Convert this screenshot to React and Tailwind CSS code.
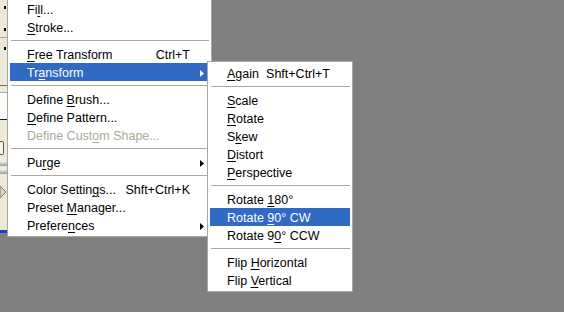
import React from 'react'

const mainItems = [
  { label: ['Fi', 'l', 'l...'] },
  { label: ['', 'S', 'troke...'] },
  { sep: true },
  { label: ['', 'F', 'ree Transform'], key: 'Ctrl+T' },
  { label: ['Tr', 'a', 'nsform'], sub: true, active: true },
  { sep: true },
  { label: ['Define ', 'B', 'rush...'] },
  { label: ['', 'D', 'efine Pattern...'] },
  { label: ['Define Cust', 'o', 'm Shape...'], disabled: true },
  { sep: true },
  { label: ['Pu', 'r', 'ge'], sub: true },
  { sep: true },
  { label: ['Color Settin', 'g', 's...'], key: 'Shft+Ctrl+K' },
  { label: ['Preset ', 'M', 'anager...'] },
  { label: ['Prefere', 'n', 'ces'], sub: true },
]

const subItems = [
  { label: ['', 'A', 'gain'], key: 'Shft+Ctrl+T' },
  { sep: true },
  { label: ['', 'S', 'cale'] },
  { label: ['', 'R', 'otate'] },
  { label: ['S', 'k', 'ew'] },
  { label: ['', 'D', 'istort'] },
  { label: ['', 'P', 'erspective'] },
  { sep: true },
  { label: ['Rotate ', '1', '80°'] },
  { label: ['Rotate ', '9', '0° CW'], active: true },
  { label: ['Rotate 9', '0', '° CCW'] },
  { sep: true },
  { label: ['Flip ', 'H', 'orizontal'] },
  { label: ['Flip ', 'V', 'ertical'] },
]

function Arrow({ white }) {
  return (
    <svg width="4" height="7" viewBox="0 0 4 7" className="block">
      <path d="M0 0 L4 3.5 L0 7 Z" fill={white ? '#ffffff' : '#000000'} />
    </svg>
  )
}

function MenuRow({ item, padRight }) {
  if (item.sep) {
    return (
      <div className="h-[9px] flex items-center pl-px">
        <div className="h-px w-full bg-[#ACA899]" />
      </div>
    )
  }
  const [a, u, b] = item.label
  const color = item.active
    ? 'bg-[#316AC5] text-white'
    : item.disabled
      ? 'text-[#ACA899]'
      : 'text-black'
  return (
    <div className={`flex items-center h-[18px] pl-[17px] pt-[2px] whitespace-nowrap ${padRight} ${color}`}>
      <span className="flex-1">
        {a}
        <span className="underline decoration-1 underline-offset-[2px]">{u}</span>
        {b}
      </span>
      {item.key && <span>{item.key}</span>}
      <span className="w-[14px] flex justify-end">
        {item.sub && <Arrow white={item.active} />}
      </span>
    </div>
  )
}

function Menu({ items, className, padRight }) {
  return (
    <div className={`absolute bg-white border border-[#ACA899] p-[2px] ${className}`}>
      {items.map((it, i) => (
        <MenuRow key={i} item={it} padRight={padRight} />
      ))}
    </div>
  )
}

function ToolStrip() {
  // bit of the Photoshop toolbar peeking out left of the menu
  return (
    <div className="w-[7px] h-full flex flex-col">
      <div className="h-[37px] bg-[#ECE9D8] flex flex-col items-end pt-[6px] gap-[19px] pr-[1px]">
        <div className="w-[2px] h-[3px] bg-black" />
        <div className="w-[2px] h-[3px] bg-black" />
      </div>
      <div className="h-px bg-[#ACA899]" />
      <div className="h-[47px] bg-[#ECE9D8] flex flex-col items-end pt-[9px] pr-[1px]">
        <div className="w-[2px] h-[3px] bg-black" />
      </div>
      <div className="h-px bg-[#716F64]" />
      <div className="h-[6px] bg-[#ECE9D8]" />
      <div className="h-[27px] bg-[#FBFBF8] border-t border-[#ACA899]" />
      <div className="h-px bg-[#222]" />
      <div className="h-[20px] bg-[#ECE9D8]" />
      <div className="h-[16px] bg-[#ECE9D8] flex items-center">
        <div className="w-[4px] h-[14px] border border-[#555] rounded-r-[2px] bg-[#F4F3EE] border-l-0" />
      </div>
      <div className="h-[5px] bg-[#ECE9D8]" />
      <div className="h-[5px] bg-gradient-to-b from-[#F5F5F5] to-[#9A9A9A]" />
      <div className="h-[3px] bg-[#ECE9D8]" />
      <div className="h-[5px] bg-gradient-to-b from-[#F5F5F5] to-[#9A9A9A]" />
      <div className="h-[10px] bg-[#ECE9D8]" />
      <div className="h-[16px] bg-[#ECE9D8] flex items-center">
        <svg width="7" height="14" viewBox="0 0 7 14" className="block">
          <path d="M0 1 L6 7 L0 13 Z" fill="#D8D6CC" stroke="#777" strokeWidth="1" />
        </svg>
      </div>
      <div className="h-[30px] bg-[#ECE9D8]" />
      <div className="h-[3px] bg-[#1B3FCF]" />
      <div className="flex-1 bg-[#808080]" />
    </div>
  )
}

export default function App() {
  return (
    <div
      className="relative w-[564px] h-[312px] overflow-hidden bg-[#808080] text-[12.5px] leading-[16px]"
      style={{ fontFamily: '"Liberation Sans", Arial, sans-serif' }}
    >
      <ToolStrip />
      <Menu items={mainItems} className="left-[7px] top-[-3px] w-[205px]" padRight="pr-[5px]" />
      <Menu items={subItems} className="left-[207px] top-[61px] w-[146px]" padRight="pr-[6px]" />
    </div>
  )
}
